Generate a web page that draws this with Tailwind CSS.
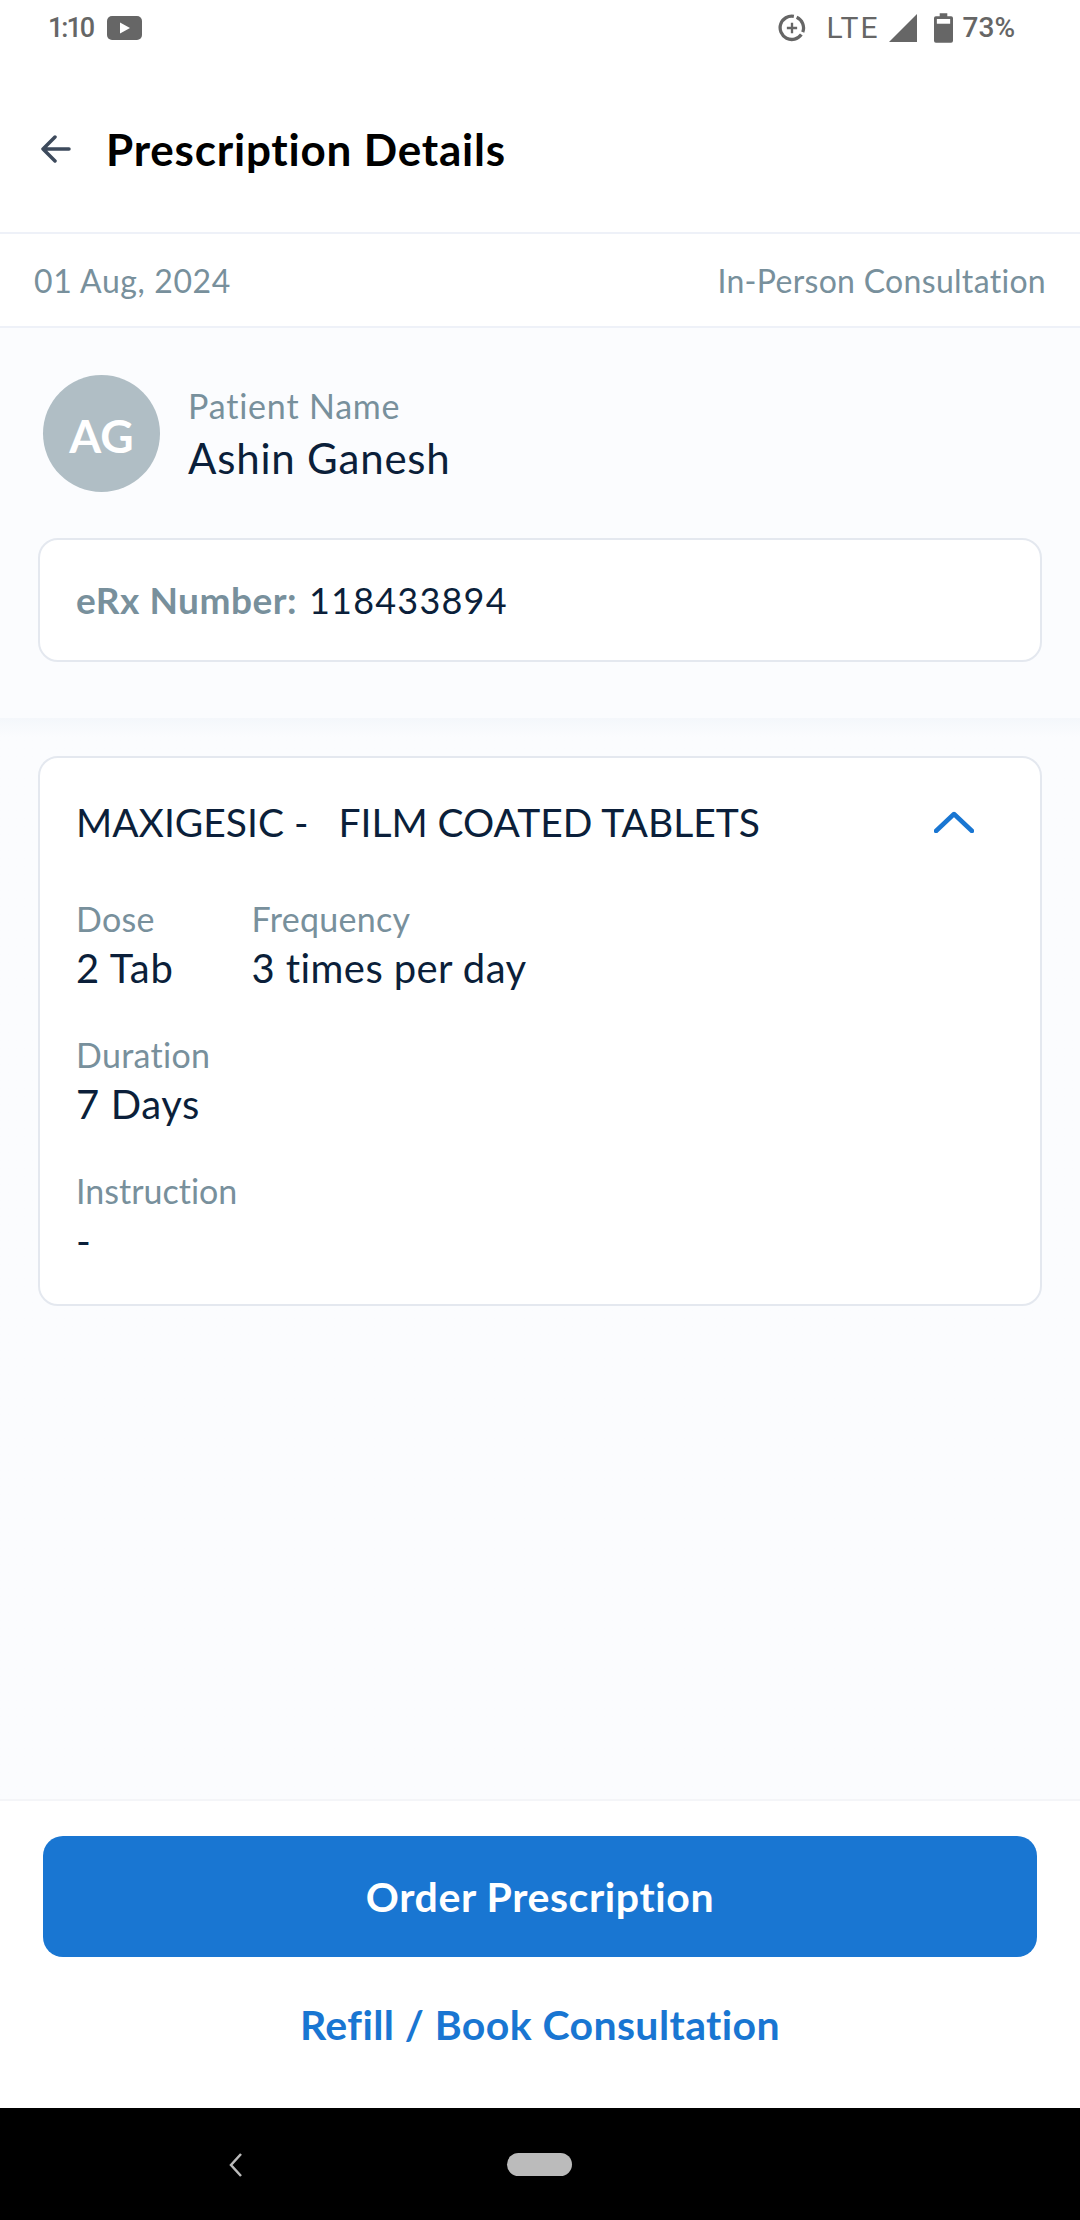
<!DOCTYPE html>
<html lang="en">
<head>
  <meta charset="UTF-8" />
  <meta name="viewport" content="width=device-width, initial-scale=1.0" />
  <title>Prescription Details</title>
  <script src="https://cdn.jsdelivr.net/npm/@tailwindcss/browser@4"></script>
</head>
<body class="bg-white font-['Lato',sans-serif] [font-variant-ligatures:none]">
<div class="w-[1080px] h-[2220px] flex flex-col overflow-hidden text-[#0b1f3a]">

  <!-- status bar -->
  <div class="h-[56px] pl-[48px] pr-[65px] flex items-center justify-between text-[#666666] font-['Roboto',sans-serif]">
    <div class="flex items-center">
      <span class="w-[59px] text-[27px] font-medium tracking-[-2px]">1:10</span>
      <svg width="35" height="24" viewBox="0 0 35 24"><rect width="35" height="24" rx="5" fill="#666666"/><path d="M13 6.500l10 5.500-10 5.500z" fill="#fff"/></svg>
    </div>
    <div class="flex items-center">
      <svg width="28" height="28" viewBox="0 0 30 30" fill="none" stroke="#666666" stroke-width="3.500"><path d="M25 22a12.500 12.500 0 1 1-8-19.500"/><path d="M20 3.500a12.500 12.500 0 0 1 6.500 16"/><path d="M15 9.500v11M9.500 15h11" stroke-width="2.500"/></svg>
      <span class="ml-[20px] text-[30px] leading-none tracking-[2px]">LTE</span>
      <svg class="ml-[9px]" width="28" height="28" viewBox="0 0 30 30"><path d="M30 0v30H0z" fill="#666666"/></svg>
      <svg class="ml-[17px]" width="19" height="30" viewBox="0 0 20 31"><path d="M6 0h8v3h4a2 2 0 0 1 2 2v24a2 2 0 0 1-2 2H2a2 2 0 0 1-2-2V5a2 2 0 0 1 2-2h4z" fill="#666666"/><rect x="3" y="6" width="14" height="5" fill="#ffffff"/></svg>
      <span class="ml-[10px] text-[28px] font-medium">73%</span>
    </div>
  </div>

  <!-- header -->
  <div class="h-[176px] flex items-center pl-[41px] pt-[10px]">
    <svg width="30" height="28" viewBox="0 0 30 28" fill="none" stroke="#3d4a5c" stroke-width="3.500" stroke-linecap="round" stroke-linejoin="round"><path d="M28 14H2M14 2L2 14l12 12"/></svg>
    <h1 class="ml-[35px] text-[44px] font-bold text-black tracking-[0.8px]">Prescription Details</h1>
  </div>

  <!-- date row -->
  <div class="h-[96px] border-y-2 border-[#eef1f8] px-[34px] pt-[2px] flex items-center justify-between text-[32px] text-[#78909c]">
    <span class="tracking-[0.6px]">01 Aug, 2024</span>
    <span class="tracking-[0.3px]">In-Person Consultation</span>
  </div>

  <!-- patient -->
  <div class="bg-[#fbfcfe] h-[390px] px-[38px] pt-[47px]">
    <div class="flex items-center pl-[5px]">
      <div class="w-[117px] h-[117px] pt-[3px] rounded-full bg-[#b0bec5] flex items-center justify-center text-white text-[46px] font-bold">AG</div>
      <div class="ml-[28px] pt-[2px] flex flex-col">
        <span class="text-[34px] leading-[44px] text-[#78909c] tracking-[0.8px]">Patient Name</span>
        <span class="mt-[3px] text-[42px] leading-[54px] tracking-[0.8px]">Ashin Ganesh</span>
      </div>
    </div>
    <div class="mt-[46px] h-[124px] bg-white rounded-[20px] border-2 border-[#e4e8ef] flex items-center px-[36px] text-[36px]">
      <span class="text-[37px] font-bold text-[#78909c] tracking-[0.5px]">eRx Number:</span>
      <span class="ml-[12px] tracking-[1.2px]">118433894</span>
    </div>
  </div>

  <!-- medicine -->
  <div class="flex-1 bg-gradient-to-b from-[#f4f7fb] to-[#fbfcfe] to-[19px] px-[38px] pt-[38px]">
    <div class="h-[550px] bg-white rounded-[20px] border-2 border-[#e4e8ef] px-[36px] pt-[39px]">
      <div class="flex items-center justify-between pr-[30px]">
        <span class="text-[39px] leading-[50px]">MAXIGESIC -&nbsp;&nbsp; FILM COATED TABLETS</span>
        <svg width="40" height="22" viewBox="0 0 40 22" fill="none" stroke="#1976d2" stroke-width="4.500" stroke-linecap="round" stroke-linejoin="round"><path d="M2 20L20 3l18 17"/></svg>
      </div>
      <div class="mt-[50px] flex gap-[78px]">
        <div class="flex flex-col">
          <span class="text-[34px] leading-[44px] text-[#78909c] tracking-[0.3px]">Dose</span>
          <span class="mt-[1px] text-[40px] leading-[52px] tracking-[0.8px]">2 Tab</span>
        </div>
        <div class="flex flex-col">
          <span class="text-[34px] leading-[44px] text-[#78909c] tracking-[0.3px]">Frequency</span>
          <span class="mt-[1px] text-[40px] leading-[52px] tracking-[0.4px]">3 times per day</span>
        </div>
      </div>
      <div class="mt-[39px] flex flex-col">
        <span class="text-[34px] leading-[44px] text-[#78909c] tracking-[0.3px]">Duration</span>
        <span class="mt-[1px] text-[40px] leading-[52px] tracking-[0.6px]">7 Days</span>
      </div>
      <div class="mt-[39px] flex flex-col">
        <span class="text-[34px] leading-[44px] text-[#78909c]">Instruction</span>
        <span class="mt-[2px] text-[40px] leading-[52px]">-</span>
      </div>
    </div>
  </div>

  <!-- footer -->
  <div class="h-[309px] bg-white border-t-2 border-[#f4f5f8] px-[43px] pt-[35px] flex flex-col items-center">
    <button class="w-full h-[121px] rounded-[20px] bg-[#1976d2] text-white text-[41px] font-bold tracking-[0.6px]">Order Prescription</button>
    <span class="mt-[42px] text-[41px] leading-[52px] font-bold text-[#1976d2] tracking-[0.4px]">Refill / Book Consultation</span>
  </div>

  <!-- nav bar -->
  <div class="h-[112px] bg-black relative">
    <svg class="absolute left-[228px] top-[45px]" width="16" height="24" viewBox="0 0 16 24" fill="none" stroke="#bbbbbb" stroke-width="2.500"><path d="M13 1L3 12l10 11"/></svg>
    <div class="absolute left-[507px] top-[45px] w-[65px] h-[23px] rounded-full bg-[#bbbbbb]"></div>
  </div>
</div>
</body>
</html>
